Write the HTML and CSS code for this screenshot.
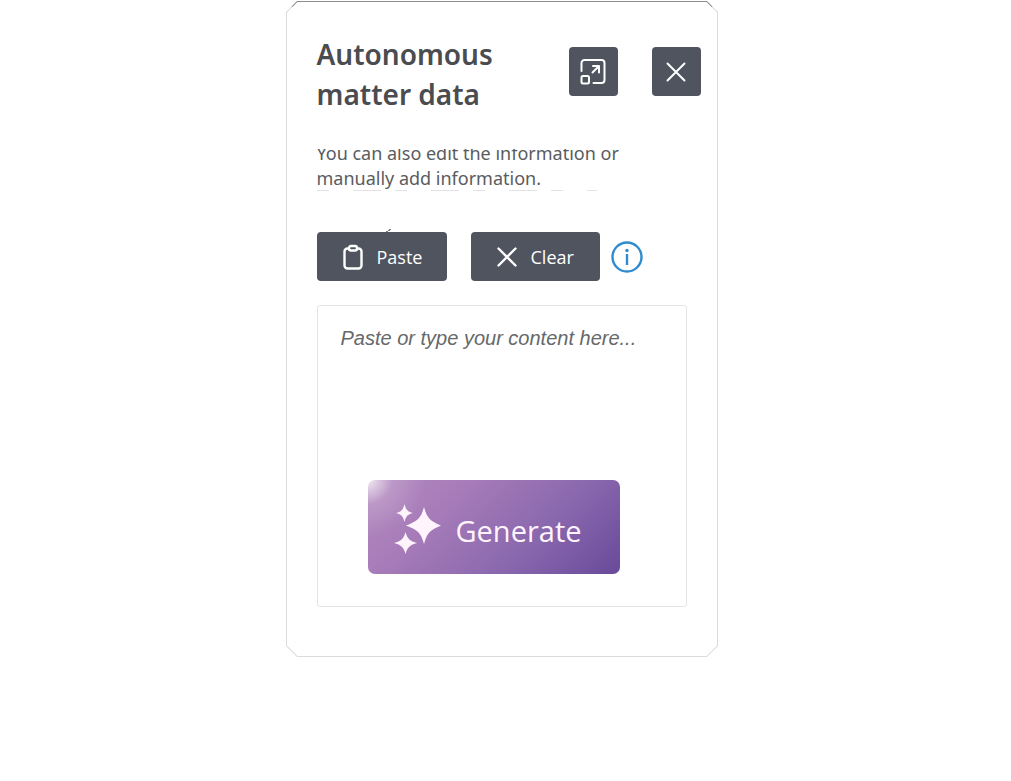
FILE: index.html
```
<!DOCTYPE html>
<html lang="en">
<head>
  <meta charset="UTF-8" />
  <meta name="viewport" content="width=device-width, initial-scale=1.0" />
  <title>Autonomous matter data</title>
  <link rel="stylesheet" href="styles.css">
</head>
<body>
  <main class="panel">
    <header class="panel-header">
      <h1>Autonomous matter data</h1>
      <div class="window-actions">
        <button class="btn btn-icon" type="button" aria-label="Expand">
          <svg width="26" height="26" viewBox="0 0 26 26" fill="none" stroke="currentColor" stroke-width="2" stroke-linecap="round" stroke-linejoin="round">
            <path d="M1.500 12V4a3 3 0 0 1 3-3h17a3 3 0 0 1 3 3v17a3 3 0 0 1-3 3H13.500"/>
            <rect x="1.500" y="17" width="7.500" height="7.500" rx="1.500"/>
            <path d="M12.500 13.500l6.500-6.500M13 7h6v6.500"/>
          </svg>
        </button>
        <button class="btn btn-icon" type="button" aria-label="Close">
          <svg width="20" height="20" viewBox="0 0 20 20" fill="none" stroke="currentColor" stroke-width="2" stroke-linecap="round">
            <path d="M1.500 1.500l17 17M18.500 1.500l-17 17"/>
          </svg>
        </button>
      </div>
    </header>

    <div class="description">
      <p>You can also edit the information or manually add information.</p>
    </div>

    <div class="toolbar">
      <button class="btn btn-paste" type="button">
        <svg width="20" height="26" viewBox="0 0 20 26" fill="none" stroke="currentColor" stroke-width="2.400" stroke-linejoin="round">
          <path d="M6 4.500H4.500a3 3 0 0 0-3 3v14a3 3 0 0 0 3 3h11a3 3 0 0 0 3-3v-14a3 3 0 0 0-3-3H14"/>
          <rect x="6" y="2" width="8" height="4.500" rx="2"/>
        </svg>
        Paste
      </button>
      <button class="btn btn-clear" type="button">
        <svg width="20" height="20" viewBox="0 0 20 20" fill="none" stroke="currentColor" stroke-width="2.400" stroke-linecap="round">
          <path d="M1.500 1.500l17 17M18.500 1.500l-17 17"/>
        </svg>
        Clear
      </button>
      <button class="info" type="button" aria-label="More information">
        <svg width="32" height="32" viewBox="0 0 32 32" fill="none" stroke="currentColor" stroke-width="2.400">
          <circle cx="16" cy="16" r="14.500"/>
          <path d="M16 13v11"/>
          <circle cx="16" cy="9.500" r="1.700" fill="currentColor" stroke="none"/>
        </svg>
      </button>
    </div>

    <div class="editor">
      <textarea aria-label="Content" placeholder="Paste or type your content here..."></textarea>
      <button class="generate" type="button">
        <svg width="48" height="52" viewBox="0 0 48 52" fill="currentColor">
          <path d="M30 3C33 14 36 17 47 21.500C36 26 33 29 30 40C27 29 24 26 12 21.500C24 17 27 14 30 3Z"/>
          <path d="M10.500 0C12 6 13.500 7.500 19 9C13.500 10.500 12 12 10.500 18C9 12 7.500 10.500 2 9C7.500 7.500 9 6 10.500 0Z"/>
          <path d="M11.500 28C13.500 35 16 37 23 39C16 41 13.500 43 11.500 50C9.500 43 7 41 0 39C7 37 9.500 35 11.500 28Z"/>
        </svg>
        Generate
      </button>
    </div>
  </main>
</body>
</html>
```
FILE: styles.css
```
:root {
  --text: #4a4c50;
  --button: #50545e;
  --line: #e4e4e4;
}

* {
  box-sizing: border-box;
}

body {
  margin: 0;
  padding: 1px 8px 24px 0;
  font-family: 'Noto Sans', 'Open Sans', sans-serif;
  background: #fff;
  color: var(--text);
}

button {
  font-family: 'Open Sans', 'Noto Sans', sans-serif;
  border: none;
  cursor: pointer;
}

svg {
  flex: none;
}

.panel {
  width: 100%;
  max-width: 432px;
  margin: 0 auto;
  padding: 32px 16px 49px 30px;
  border: 1px solid #dcdcdc;
  border-top-color: #8c8c8c;
  border-radius: 11px;
  corner-shape: bevel;
}

.panel-header {
  display: flex;
  justify-content: space-between;
  align-items: flex-start;
}

h1 {
  width: 200px;
  margin: 0;
  font-size: 28px;
  line-height: 40px;
  font-weight: 600;
}

.window-actions {
  display: flex;
  gap: 34px;
  padding-top: 13px;
}

.btn {
  display: flex;
  align-items: center;
  gap: 14px;
  height: 49px;
  padding: 0 0 0 26px;
  border-radius: 4px;
  background: var(--button);
  color: #fff;
  font-size: 18px;
}

.btn-icon {
  justify-content: center;
  width: 49px;
  padding: 0;
}

/* the text is scrolled a little, so its first line is cut off */
.description {
  height: 42px;
  margin-top: 35px;
  overflow: hidden;
}

.description p {
  max-width: 340px;
  margin: -8px 0 0;
  color: #5a5c60;
  font-size: 18px;
  line-height: 25px;
}

/* faint tops of the line below the visible ones */
.description::after {
  content: '';
  display: block;
  width: 280px;
  height: 1px;
  margin-top: -1px;
  background: repeating-linear-gradient(90deg, #e2e2e6 0 12px, #fff 12px 36px, #e2e2e6 36px 64px, #fff 64px 78px);
}

.toolbar {
  display: flex;
  align-items: center;
  margin-top: 41px;
}

.btn-paste {
  position: relative;
  width: 130px;
}

.btn-paste::before {
  content: '';
  position: absolute;
  top: -3px;
  left: 69px;
  width: 5px;
  height: 3px;
  background: linear-gradient(to bottom right, transparent 40%, #77797d 40% 62%, transparent 62%);
}

.btn-clear {
  width: 129px;
  margin-left: 24px;
}

.info {
  display: flex;
  margin-left: 11px;
  padding: 0;
  background: none;
  color: #2f8bd0;
}

.editor {
  display: flex;
  flex-direction: column;
  margin: 24px 14px 0 0;
  padding-bottom: 32px;
  border: 1px solid var(--line);
  border-radius: 3px;
}

.editor textarea {
  height: 174px;
  padding: 20px 23px;
  border: none;
  outline: none;
  resize: none;
  background: none;
  color: var(--text);
  font: italic 20px/24px 'Liberation Sans', Arial, sans-serif;
}

.editor textarea::placeholder {
  color: #66686a;
  opacity: 1;
}

.generate {
  display: flex;
  align-items: center;
  gap: 14px;
  width: 252px;
  height: 94px;
  margin-left: 50px;
  padding: 6px 0 0 26px;
  border-radius: 7px;
  background:
    radial-gradient(circle at 0 0, rgba(255, 255, 255, 0.8), rgba(255, 255, 255, 0.15) 24px, rgba(255, 255, 255, 0) 56px),
    linear-gradient(135deg, #b48bc0 0%, #a67bb8 30%, #8a68ae 65%, #684a9a 100%);
  color: #fff3fc;
  font-size: 29px;
}
```
